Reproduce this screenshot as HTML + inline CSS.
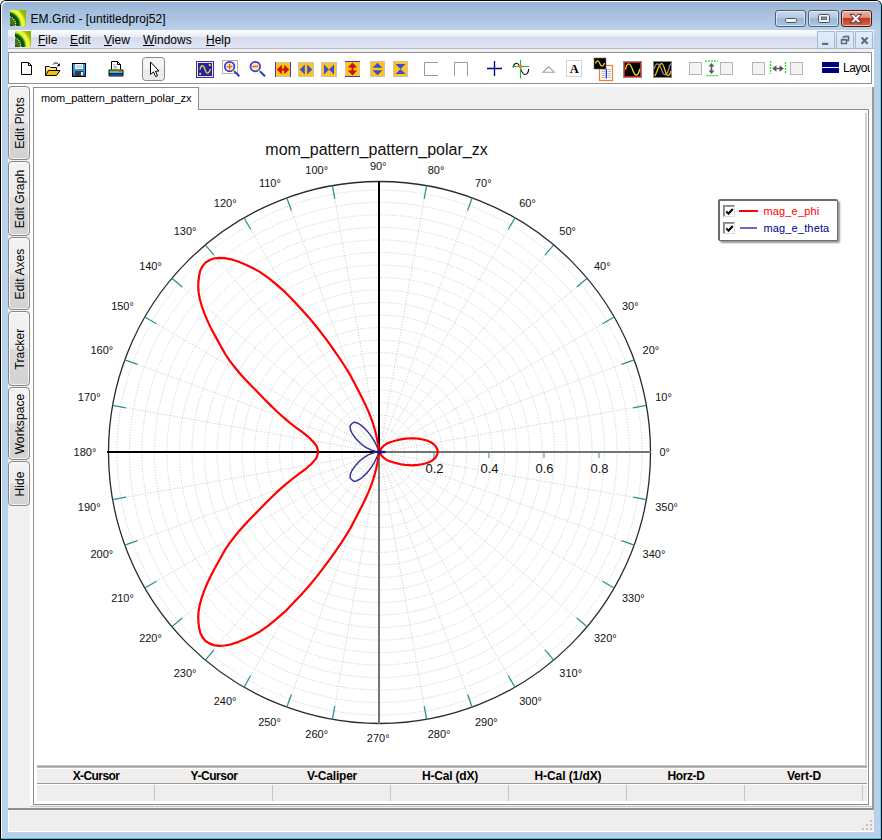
<!DOCTYPE html>
<html>
<head>
<meta charset="utf-8">
<title>EM.Grid - [untitledproj52]</title>
<style>
*{box-sizing:border-box;margin:0;padding:0}
html,body{width:882px;height:840px;overflow:hidden;background:#fff}
body{font-family:"Liberation Sans",Arial,sans-serif;font-size:12px;color:#000;position:relative}
.abs{position:absolute}
#win{position:absolute;left:0;top:0;width:882px;height:840px;background:#000;border-radius:6px 6px 0 0;overflow:hidden}
#glass{position:absolute;left:1px;top:1px;width:880px;height:838px;border-radius:5px 5px 0 0;background:linear-gradient(#98b3d3 0,#9ab5d5 2px,#b9d1ea 29px,#b9d1ea 100%);overflow:hidden;box-shadow:inset 1px 1px 0 0 #fbfdff}
#hl-top{display:none}
#hl-left{display:none}
#cy-right{position:absolute;left:879px;top:3px;width:1px;height:835px;background:#4dd0fb}
#cy-bot{position:absolute;left:0;top:837px;width:880px;height:1px;background:#35c8f0}
#client{position:absolute;left:8px;top:30px;width:864px;height:801px;background:#f0f0f0}
#rshadow{position:absolute;left:872px;top:85px;width:2px;height:725px;background:#9a9a9a}
#title{position:absolute;left:30.5px;top:11px;height:16px;line-height:16px;font-size:12px;color:#000;white-space:nowrap;letter-spacing:.07px}
.cap{position:absolute;top:10px;height:17px;border:1px solid #4f5f78;border-radius:3px;box-shadow:inset 0 0 0 1px rgba(255,255,255,.55)}
.cap.n{background:linear-gradient(#c9d9ec 0,#b5c9e2 47%,#9db8d8 50%,#a9c2de 100%)}
.cap.c{background:linear-gradient(#e9b4a6 0,#d98a78 47%,#c0391f 50%,#d4694f 100%);border-color:#4a1515}
#menubar{position:absolute;left:8px;top:30px;width:866px;height:18px;background:linear-gradient(#fdfdfe 0,#e9ecf5 6.5px,#d5dbee 7px,#e1e6f5 18px)}
#menuline{position:absolute;left:8px;top:48px;width:866px;height:1px;background:#b6bccc}
.mi{position:absolute;top:32px;height:16px;line-height:16px;font-size:12px;white-space:nowrap}
.mi u{text-decoration:underline;text-underline-offset:1px;text-decoration-thickness:1px}
.mdi{position:absolute;top:31px;width:18px;height:18px;border:1px solid #a6b9d3;background:linear-gradient(#e2ecf9,#d8e5f6)}
#toolbar{position:absolute;left:8px;top:52px;width:864px;height:32px;border:1px solid #8e8e98;background:#fff;overflow:hidden}
.sb{position:absolute;left:8px;width:22px;border:1px solid #868686;border-radius:4px;background:linear-gradient(#f3f3f3 0,#ececec 48%,#dcdcdc 52%,#d2d2d2 100%);box-shadow:inset 0 0 0 1px rgba(255,255,255,.7)}
.sb span{position:absolute;left:calc(50% + 1px);top:50%;white-space:nowrap;font-size:12px;transform:translate(-50%,-50%) rotate(-90deg);letter-spacing:.1px}
#strip{position:absolute;left:30px;top:87px;width:3px;height:720px;background:#fff}
#rstrip{position:absolute;left:869px;top:109px;width:3px;height:698px;background:#fff}
#wstrip{position:absolute;left:8px;top:84px;width:866px;height:3px;background:#fff}
#wcol{position:absolute;left:872px;top:49px;width:2px;height:36px;background:#fff}
#panel{position:absolute;left:33px;top:109px;width:836px;height:696px;border:1px solid #8c8e9a;background:#fff}
#tab{position:absolute;left:33px;top:87px;width:166px;height:23px;border:1px solid #8c8e9a;border-bottom:none;background:#fff}
#tab span{position:absolute;left:7px;top:4px;font-size:11px;line-height:13px;white-space:nowrap;letter-spacing:-.09px}
.plot{position:absolute;left:34px;top:110px}
#vline{position:absolute;left:865px;top:113px;width:2px;height:653px;background:#d2d2d2}
#hline{position:absolute;left:37px;top:765px;width:830px;height:3px;background:linear-gradient(#c8c8c8 0,#c8c8c8 1px,#9c9c9c 1px,#9c9c9c 2px,#c0c0c0 2px)}
#th{position:absolute;left:37px;top:769px;width:830px;height:14px;background:#f0eded}
#thl{position:absolute;left:37px;top:783px;width:830px;height:1px;background:#9a9a9a}
#tr{position:absolute;left:37px;top:785px;width:830px;height:16px;background:#f0eded}
.hc{position:absolute;top:769px;width:118px;height:15px;line-height:15px;text-align:center;font-weight:bold;font-size:12px;letter-spacing:-.65px;white-space:nowrap}
.vs{position:absolute;top:785px;width:1px;height:16px;background:#c6c6c6}
#pbot2{position:absolute;left:30px;top:806px;width:842px;height:1px;background:#c8c8c8}
#stl{position:absolute;left:8px;top:808px;width:865px;height:2px;background:#8f8f8f}
#status{position:absolute;left:8px;top:810px;width:866px;height:22px;background:#f0eded;border-left:1px solid #fff;border-bottom:1px solid #fff}
</style>
</head>
<body>
<div id="win">
<div id="glass"><div id="hl-top"></div><div id="hl-left"></div><div id="cy-right"></div><div id="cy-bot"></div></div>
<div id="client"></div>
<div id="rshadow"></div>

<!-- title bar -->
<svg class="abs" style="left:10px;top:10px" width="16" height="16" viewBox="0 0 16 16"><defs><radialGradient id="rg1" gradientUnits="userSpaceOnUse" cx="-3" cy="15" r="26"><stop offset="0" stop-color="#5a8a10"/><stop offset=".327" stop-color="#3f6f08"/><stop offset=".358" stop-color="#0a4208"/><stop offset=".46" stop-color="#0c5a0c"/><stop offset=".508" stop-color="#48b018"/><stop offset=".55" stop-color="#e4f030"/><stop offset=".635" stop-color="#f8f840"/><stop offset=".69" stop-color="#d4e424"/><stop offset=".75" stop-color="#98c008"/><stop offset="1" stop-color="#6ea800"/></radialGradient></defs><rect width="16" height="16" fill="url(#rg1)"/><circle cx="-3" cy="15" r="8.8" fill="none" stroke="#f4f8e8" stroke-width="1.1" stroke-dasharray="1.2 1"/><circle cx="-3" cy="15" r="19.2" fill="none" stroke="#9aa820" stroke-width=".7" stroke-dasharray="1 1" opacity=".8"/><rect x="0" y="14.5" width="2.5" height="1.5" fill="#2a2a3a" opacity=".8"/></svg>
<div id="title">EM.Grid - [untitledproj52]</div>
<div class="cap n" style="left:775px;width:31px"><svg class="abs" style="left:9px;top:7px" width="13" height="6"><rect x=".5" y=".5" width="11" height="4" rx="1.2" fill="#f4f4f4" stroke="#4a5565"/></svg></div>
<div class="cap n" style="left:808px;width:31px"><svg class="abs" style="left:8.5px;top:3px" width="13" height="10"><rect x=".5" y=".5" width="11" height="8" rx="1.2" fill="#f4f4f4" stroke="#4a5565"/><rect x="3.5" y="3" width="5" height="2.6" fill="#7f98b8" stroke="#4a5565" stroke-width=".8"/></svg></div>
<div class="cap c" style="left:841px;width:31px"><svg class="abs" style="left:7.4px;top:2px" width="15" height="12" viewBox="0 0 15 12"><path d="M1 1.4 H4.8 L6.8 3.7 L8.8 1.4 H12.6 L8.9 5.6 L12.6 9.8 H8.8 L6.8 7.5 L4.8 9.8 H1 L4.7 5.6 Z" fill="#f8f8f8" stroke="#4a2828" stroke-width=".9" stroke-linejoin="round"/></svg></div>

<!-- menu bar -->
<div id="menubar"></div><div id="menuline"></div>
<svg class="abs" style="left:15px;top:31px" width="16" height="16" viewBox="0 0 16 16"><rect width="16" height="16" fill="url(#rg1)"/><circle cx="-3" cy="15" r="8.8" fill="none" stroke="#f4f8e8" stroke-width="1.1" stroke-dasharray="1.2 1"/><circle cx="-3" cy="15" r="19.2" fill="none" stroke="#9aa820" stroke-width=".7" stroke-dasharray="1 1" opacity=".8"/><rect x="0" y="14.5" width="2.5" height="1.5" fill="#2a2a3a" opacity=".8"/></svg>
<div class="mi" style="left:38px"><u>F</u>ile</div>
<div class="mi" style="left:70px"><u>E</u>dit</div>
<div class="mi" style="left:104px"><u>V</u>iew</div>
<div class="mi" style="left:143px"><u>W</u>indows</div>
<div class="mi" style="left:206px"><u>H</u>elp</div>
<div class="mdi" style="left:817px"><svg width="16" height="16"><rect x="4" y="10.800" width="6.200" height="2.100" fill="#5e687c"/></svg></div>
<div class="mdi" style="left:836px"><svg width="16" height="16"><path d="M6.5 4.5h5v4h-2 M6.5 6v-1.5" fill="none" stroke="#5e687c" stroke-width="1.6"/><rect x="4.5" y="7.5" width="5" height="4" fill="none" stroke="#5e687c" stroke-width="1.4"/><rect x="4" y="7" width="6" height="1.6" fill="#5e687c"/></svg></div>
<div class="mdi" style="left:855px"><svg width="16" height="16"><path d="M5.600 5.500 L11.600 11.700 M11.600 5.500 L5.600 11.700" stroke="#5e687c" stroke-width="2"/></svg></div>

<!-- toolbar -->
<div id="wstrip"></div><div id="wcol"></div><div id="toolbar"></div>
<svg class="abs" style="left:10px;top:53px" width="859.5" height="30" viewBox="10 53 859.5 30">
<!-- new -->
<path d="M21.5 62.5 H28.5 L31.5 65.5 V74.5 H21.5 Z" fill="#fff" stroke="#000" stroke-width="1"/>
<path d="M28.5 62.5 V65.5 H31.5" fill="none" stroke="#000" stroke-width="1"/>
<!-- open -->
<path d="M45.5 75.5 V66.5 H49.5 L50.5 67.5 H56.5 V70" fill="#fbf3c8" stroke="#000" stroke-width="1"/>
<path d="M47 68.500h1v1h-1zM49 68.500h1v1h-1zM51 68.500h1v1h-1zM53 68.500h1v1h-1zM55 68.500h1v1h-1zM48 69.500h1v1h-1zM46 69.500h1v1h-1zM46 71.500h1v1h-1zM47 70.500h1v1h-1zM46 73.500h1v1h-1zM47 72.500h1v1h-1z" fill="#f5c400"/><path d="M45.5 75.5 L48.5 70.5 H60 L56.5 75.5 Z" fill="#f5c400" stroke="#000" stroke-width="1" stroke-linejoin="round"/>
<path d="M53 64.5 C54.5 62.3 57.5 62.3 59 65" fill="none" stroke="#000" stroke-width="1"/>
<path d="M59.8 63 V66.2 H56.8 Z" fill="#000"/>
<!-- save -->
<rect x="72.5" y="63.5" width="13" height="13" fill="#1e9cf0" stroke="#000"/>
<rect x="75" y="64" width="8" height="5" fill="#f4f4f4"/>
<rect x="76" y="65" width="6" height="3" fill="#d4d4d4"/>
<rect x="75" y="71" width="8.5" height="5" fill="#3a3a3a"/>
<rect x="81" y="72" width="1.8" height="3.4" fill="#fff"/>
<rect x="73" y="73.5" width="1.5" height="2.5" fill="#3a3ad0"/><rect x="84" y="73.5" width="1.5" height="2.5" fill="#3a3ad0"/>
<!-- print -->
<path d="M111.5 69.5 V61.5 H117.5 L120.5 64.5 V69.5" fill="#fff" stroke="#000"/>
<path d="M117.5 61.5 V64.5 H120.5" fill="none" stroke="#000"/>
<path d="M113.5 64.5h2 M113.5 66.5h3 M113.5 68h4" stroke="#888" stroke-width=".8"/>
<rect x="108.5" y="69.5" width="15" height="7" rx="1" fill="#000"/>
<rect x="109.5" y="70.5" width="13" height="1.3" fill="#c8e020"/>
<rect x="109.5" y="71.8" width="13" height="1.5" fill="#18c8d8"/>
<rect x="109.5" y="73.3" width="13" height="1.2" fill="#102080"/>
<rect x="109.5" y="74.5" width="13" height="1.2" fill="#3868d8"/>
<rect x="119" y="70.6" width="2" height="1.2" fill="#e03030"/>
<!-- pointer button -->
<rect x="142.5" y="57.5" width="22" height="23" rx="3" fill="#ececec" stroke="#8a8a8a"/>
<rect x="143.5" y="58.5" width="20" height="10.5" rx="2" fill="#f5f5f5"/>
<path d="M150.5 62 V74.5 L153.4 71.9 L155.6 76.6 L157.6 75.7 L155.4 71.2 L159 71 Z" fill="#fff" stroke="#000" stroke-width="1" stroke-linejoin="miter"/>
<!-- scope -->
<rect x="196" y="61" width="18" height="17" fill="#2424a8"/>
<rect x="196.5" y="61.5" width="17" height="16" fill="none" stroke="#3030d0" stroke-width="1"/>
<rect x="197.5" y="62.5" width="15" height="14" fill="none" stroke="#f4e8b0" stroke-width="1"/>
<path d="M200 69.5 C201 64.5 203.5 64.5 205 69.5 S208.5 74.5 210.5 69" fill="none" stroke="#f5d020" stroke-width="1.3"/>
<rect x="208.8" y="64" width="2" height="2" fill="#f5d020"/><rect x="199.2" y="72.8" width="2" height="2" fill="#f5d020"/>
<!-- zoom in -->
<rect x="222.5" y="60.5" width="15" height="13" fill="none" stroke="#b0b0b0"/>
<circle cx="229.6" cy="66.6" r="4.8" fill="#f6ecc0" stroke="#3838d8" stroke-width="1.7"/>
<path d="M226.8 66.6 h5.6 M229.6 63.8 v5.6" stroke="#f06010" stroke-width="1.3"/>
<path d="M233 70 L234.6 71.6" stroke="#90d020" stroke-width="1.6"/>
<path d="M234.4 71.4 L239.3 76.3" stroke="#3030c8" stroke-width="2"/>
<!-- zoom out -->
<circle cx="255.3" cy="66.6" r="4.8" fill="#f6ecc0" stroke="#3838d8" stroke-width="1.7"/>
<path d="M252.4 66.4 h5.8" stroke="#f06010" stroke-width="1.5"/>
<path d="M258.7 70 L260.3 71.6" stroke="#90d020" stroke-width="1.6"/>
<path d="M260.1 71.4 L265 76.3" stroke="#3030c8" stroke-width="2"/>
<!-- h-fit -->
<rect x="275" y="62" width="16" height="15" fill="#ffc414"/>
<path d="M275 62.5 h16 M275 76.5 h16" stroke="#c4c4c4"/>
<path d="M275.5 62 v15 M290.5 62 v15" stroke="#3838d8"/>
<path d="M276.8 69.5 L281.8 64.8 V74.2 Z M289.2 69.5 L284.2 64.8 V74.2 Z" fill="#c81010"/>
<path d="M281 69.5 h4" stroke="#c81010" stroke-width="2"/>
<!-- h-expand -->
<rect x="298.5" y="62.5" width="15" height="14" fill="#ffc414" stroke="#c4c4c4"/>
<path d="M299.8 69.5 L304.8 64.5 V74.5 Z M312.2 69.5 L307.2 64.5 V74.5 Z" fill="#3c4cd8"/>
<!-- h-contract -->
<rect x="321.5" y="62.5" width="15" height="14" fill="#ffc414" stroke="#c4c4c4"/>
<path d="M324 64.5 L329 69.5 L324 74.5 Z M334 64.5 L329 69.5 L334 74.5 Z" fill="#3c4cd8"/>
<!-- v-fit -->
<rect x="345" y="61" width="15" height="16" fill="#ffc414"/>
<path d="M345.5 61 v16 M359.5 61 v16" stroke="#c4c4c4"/>
<path d="M345 61.5 h15 M345 76.5 h15" stroke="#3838d8"/>
<path d="M352.5 62.6 L347.8 67.6 H357.2 Z M352.5 75.4 L347.8 70.4 H357.2 Z" fill="#c81010"/>
<path d="M352.5 67 v4" stroke="#c81010" stroke-width="2"/>
<!-- v-expand -->
<rect x="370.500" y="61.500" width="14" height="15" fill="#ffc414" stroke="#c4c4c4"/>
<path d="M377.5 62.8 L372.5 67.8 H382.5 Z M377.5 75.2 L372.5 70.2 H382.500 Z" fill="#3c4cd8"/>
<!-- v-contract -->
<rect x="393.500" y="61.500" width="14" height="15" fill="#ffc414" stroke="#c4c4c4"/>
<path d="M395.500 64 H405.500 L400.500 69 Z M395.500 74 H405.500 L400.500 69 Z" fill="#3c4cd8"/>
<!-- brackets -->
<path d="M438 62.500 H424.500 V75.500 H438" fill="none" stroke="#9a9a9a"/>
<path d="M454.500 76 V62.500 H467.500 V76" fill="none" stroke="#9a9a9a"/>
<!-- plus -->
<path d="M487 68.500 H502 M494.500 61 V76" stroke="#000080" stroke-width="1.350"/>
<!-- sine cursor -->
<path d="M513 67.300 C514.500 62.300 517.500 62 519.500 66 C521 69.500 522 74.500 525 74.500 C527.500 74.500 528.500 71.500 528.800 69" fill="none" stroke="#000" stroke-width="1.100"/>
<path d="M512.500 66.500 H529 M520.500 60 V78.500" stroke="#20b838" stroke-width="1.100"/>
<rect x="519" y="65" width="3" height="3" fill="#f08020"/>
<!-- triangle -->
<path d="M543 72.200 L548.600 66.800 L554.300 72.200 Z" fill="none" stroke="#a0a0a0" stroke-width="1.100"/>
<!-- A -->
<rect x="566.500" y="60.500" width="15" height="16" fill="#fff" stroke="#a8a8a8" stroke-dasharray="1 1"/>
<text x="574.2" y="72.8" font-family="'Liberation Serif',serif" font-weight="bold" font-size="12.5" text-anchor="middle" fill="#000">A</text>
<!-- scope+doc -->
<rect x="599.500" y="65.500" width="13" height="15" fill="#fff" stroke="#f08030" stroke-width="1.200"/>
<path d="M601.500 69.500h3.500M601.500 71.500h3.500M601.500 73.500h3.500M601.500 75.500h3.500M601.500 77.500h3.500M607.500 69.500h3.500M607.500 71.500h3.500M607.500 73.500h3.500M607.500 75.500h3.500M607.500 77.500h3.500" stroke="#a8a8a8" stroke-width=".800"/>
<path d="M606.300 68.500 V78.500" stroke="#2828e0" stroke-width="1.300"/>
<rect x="594" y="58" width="12" height="11" fill="#000" stroke="#777" stroke-width=".600"/>
<path d="M595.500 63.500 C596.500 60 598.500 60 599.800 63.500 S603 67 604.600 63" fill="none" stroke="#f5d020" stroke-width="1.300"/>
<!-- red scope -->
<rect x="623" y="61" width="19" height="17" fill="#8a8a8a"/>
<rect x="624" y="62" width="17" height="15" fill="#e01818"/>
<rect x="625" y="63" width="15" height="13" fill="#000"/>
<path d="M625.500 69.500 C627 62 630 62 632.500 69.500 S638 77 639.800 69" fill="none" stroke="#f5e020" stroke-width="1.300"/>
<!-- dual scope -->
<rect x="653" y="61" width="19" height="17" fill="#8a8a8a"/>
<rect x="654" y="62" width="17" height="15" fill="#000"/>
<path d="M654 69 C656 62 659 62 661.500 69.500 S667 77 669.500 66 L671 63.500" fill="none" stroke="#9a9a9a" stroke-width="1.200"/>
<path d="M654.500 76 C657 74 658.500 63.500 661.500 63.500 C664.500 63.500 665 75.500 668 75.500 C669.500 75.500 670.500 73 671 71" fill="none" stroke="#f0b818" stroke-width="1.400"/>
<!-- squares + arrows -->
<g fill="#f3f3f3" stroke="#b4b4b4">
<rect x="689.500" y="62.500" width="12" height="12"/>
<rect x="720.500" y="62.500" width="12" height="12"/>
<rect x="752.500" y="62.500" width="12" height="12"/>
<rect x="790.500" y="62.500" width="12" height="12"/>
</g>
<path d="M705 61.200 H718 M706.500 75.700 H718" stroke="#18e018" stroke-width="1.3" stroke-dasharray="2 1"/>
<path d="M711.500 63 L708.500 66.500 H714.500 Z M711.500 74 L708.500 70.500 H714.500 Z" fill="#5a5a5a"/>
<path d="M711.500 66 V71" stroke="#5a5a5a" stroke-width="1.600"/>
<path d="M770.500 61 V74 M785.500 62 V74" stroke="#18e018" stroke-width="1.3" stroke-dasharray="2 1"/>
<path d="M772.2 68.500 L776.400 65.200 V71.800 Z M783.800 68.500 L779.600 65.200 V71.800 Z" fill="#555"/>
<path d="M775.500 68.500 H780.500" stroke="#5a5a5a" stroke-width="1.400"/>
<!-- layout -->
<rect x="822" y="62" width="17" height="5" fill="#000080"/>
<rect x="822" y="68" width="17" height="5" fill="#000080"/>
<text x="843" y="72.300" font-family="'Liberation Sans',Arial,sans-serif" font-size="12" letter-spacing="-0.5" fill="#000">Layout</text>
</svg>


<!-- side buttons -->
<div class="sb" style="top:86px;height:74px"><span>Edit Plots</span></div>
<div class="sb" style="top:161px;height:75px"><span>Edit Graph</span></div>
<div class="sb" style="top:237px;height:73px"><span>Edit Axes</span></div>
<div class="sb" style="top:311px;height:75px"><span>Tracker</span></div>
<div class="sb" style="top:387px;height:73px"><span>Workspace</span></div>
<div class="sb" style="top:461px;height:45px"><span>Hide</span></div>

<!-- panel -->
<div id="strip"></div><div id="rstrip"></div>
<div id="panel"></div>
<div id="tab"><span>mom_pattern_pattern_polar_zx</span></div>
<svg class="plot" width="832" height="656" viewBox="34 110 832 656">
<g fill="none" stroke="#cacaca" stroke-width="1" stroke-dasharray="1 1.7">
<circle cx="379.5" cy="452.5" r="12.5"/>
<circle cx="379.5" cy="452.5" r="25"/>
<circle cx="379.5" cy="452.5" r="37.5"/>
<circle cx="379.5" cy="452.5" r="50"/>
<circle cx="379.5" cy="452.5" r="62.5"/>
<circle cx="379.5" cy="452.5" r="75"/>
<circle cx="379.5" cy="452.5" r="87.5"/>
<circle cx="379.5" cy="452.5" r="100"/>
<circle cx="379.5" cy="452.5" r="112.5"/>
<circle cx="379.5" cy="452.5" r="125"/>
<circle cx="379.5" cy="452.5" r="137.5"/>
<circle cx="379.5" cy="452.5" r="150"/>
<circle cx="379.5" cy="452.5" r="162.5"/>
<circle cx="379.5" cy="452.5" r="175"/>
<circle cx="379.5" cy="452.5" r="187.5"/>
<circle cx="379.5" cy="452.5" r="200"/>
<circle cx="379.5" cy="452.5" r="212.5"/>
<circle cx="379.5" cy="452.5" r="225"/>
<circle cx="379.5" cy="452.5" r="237.5"/>
<circle cx="379.5" cy="452.5" r="250"/>
<circle cx="379.5" cy="452.5" r="262.5"/>
<line x1="392.3" y1="450.2" x2="646.4" y2="405.4"/>
<line x1="391.7" y1="448.1" x2="634.2" y2="359.8"/>
<line x1="390.8" y1="446.0" x2="614.2" y2="317.0"/>
<line x1="389.5" y1="444.1" x2="587.1" y2="278.3"/>
<line x1="387.9" y1="442.5" x2="553.7" y2="244.9"/>
<line x1="386.0" y1="441.2" x2="515.0" y2="217.8"/>
<line x1="383.9" y1="440.3" x2="472.2" y2="197.8"/>
<line x1="381.8" y1="439.7" x2="426.6" y2="185.6"/>
<line x1="377.2" y1="439.7" x2="332.4" y2="185.6"/>
<line x1="375.1" y1="440.3" x2="286.8" y2="197.8"/>
<line x1="373.0" y1="441.2" x2="244.0" y2="217.8"/>
<line x1="371.1" y1="442.5" x2="205.3" y2="244.9"/>
<line x1="369.5" y1="444.1" x2="171.9" y2="278.3"/>
<line x1="368.2" y1="446.0" x2="144.8" y2="317.0"/>
<line x1="367.3" y1="448.1" x2="124.8" y2="359.8"/>
<line x1="366.7" y1="450.2" x2="112.6" y2="405.4"/>
<line x1="366.7" y1="454.8" x2="112.6" y2="499.6"/>
<line x1="367.3" y1="456.9" x2="124.8" y2="545.2"/>
<line x1="368.2" y1="459.0" x2="144.8" y2="588.0"/>
<line x1="369.5" y1="460.9" x2="171.9" y2="626.7"/>
<line x1="371.1" y1="462.5" x2="205.3" y2="660.1"/>
<line x1="373.0" y1="463.8" x2="244.0" y2="687.2"/>
<line x1="375.1" y1="464.7" x2="286.8" y2="707.2"/>
<line x1="377.2" y1="465.3" x2="332.4" y2="719.4"/>
<line x1="381.8" y1="465.3" x2="426.6" y2="719.4"/>
<line x1="383.9" y1="464.7" x2="472.2" y2="707.2"/>
<line x1="386.0" y1="463.8" x2="515.0" y2="687.2"/>
<line x1="387.9" y1="462.5" x2="553.7" y2="660.1"/>
<line x1="389.5" y1="460.9" x2="587.1" y2="626.7"/>
<line x1="390.8" y1="459.0" x2="614.2" y2="588.0"/>
<line x1="391.7" y1="456.9" x2="634.2" y2="545.2"/>
<line x1="392.3" y1="454.8" x2="646.4" y2="499.6"/>
</g>
<circle cx="379.5" cy="452.5" r="271" fill="none" stroke="#2a2a2a" stroke-width="1.3"/>
<g stroke="#2f8f8f" stroke-width="1.25">
<line x1="646.4" y1="405.4" x2="633.1" y2="407.8"/>
<line x1="634.2" y1="359.8" x2="621.5" y2="364.4"/>
<line x1="614.2" y1="317.0" x2="602.5" y2="323.8"/>
<line x1="587.1" y1="278.3" x2="576.8" y2="287.0"/>
<line x1="553.7" y1="244.9" x2="545.0" y2="255.2"/>
<line x1="515.0" y1="217.8" x2="508.2" y2="229.5"/>
<line x1="472.2" y1="197.8" x2="467.6" y2="210.5"/>
<line x1="426.6" y1="185.6" x2="424.2" y2="198.9"/>
<line x1="332.4" y1="185.6" x2="334.8" y2="198.9"/>
<line x1="286.8" y1="197.8" x2="291.4" y2="210.5"/>
<line x1="244.0" y1="217.8" x2="250.8" y2="229.5"/>
<line x1="205.3" y1="244.9" x2="214.0" y2="255.2"/>
<line x1="171.9" y1="278.3" x2="182.2" y2="287.0"/>
<line x1="144.8" y1="317.0" x2="156.5" y2="323.8"/>
<line x1="124.8" y1="359.8" x2="137.5" y2="364.4"/>
<line x1="112.6" y1="405.4" x2="125.9" y2="407.8"/>
<line x1="112.6" y1="499.6" x2="125.9" y2="497.2"/>
<line x1="124.8" y1="545.2" x2="137.5" y2="540.6"/>
<line x1="144.8" y1="588.0" x2="156.5" y2="581.2"/>
<line x1="171.9" y1="626.7" x2="182.2" y2="618.0"/>
<line x1="205.3" y1="660.1" x2="214.0" y2="649.8"/>
<line x1="244.0" y1="687.2" x2="250.7" y2="675.5"/>
<line x1="286.8" y1="707.2" x2="291.4" y2="694.5"/>
<line x1="332.4" y1="719.4" x2="334.8" y2="706.1"/>
<line x1="426.6" y1="719.4" x2="424.2" y2="706.1"/>
<line x1="472.2" y1="707.2" x2="467.6" y2="694.5"/>
<line x1="515.0" y1="687.2" x2="508.2" y2="675.5"/>
<line x1="553.7" y1="660.1" x2="545.0" y2="649.8"/>
<line x1="587.1" y1="626.7" x2="576.8" y2="618.0"/>
<line x1="614.2" y1="588.0" x2="602.5" y2="581.3"/>
<line x1="634.2" y1="545.2" x2="621.5" y2="540.6"/>
<line x1="646.4" y1="499.6" x2="633.1" y2="497.2"/>
</g>
<line x1="107" y1="452" x2="379" y2="452" stroke="#000" stroke-width="2"/>
<line x1="379" y1="181" x2="379" y2="453" stroke="#000" stroke-width="2"/>
<line x1="379" y1="452" x2="651" y2="452" stroke="#747474" stroke-width="2"/>
<line x1="379" y1="453" x2="379" y2="724" stroke="#747474" stroke-width="2"/>
<g stroke="#62b0b0" stroke-width="1.4">
<line x1="434" y1="453" x2="434" y2="458"/>
<line x1="489" y1="453" x2="489" y2="458"/>
<line x1="544" y1="453" x2="544" y2="458"/>
<line x1="599" y1="453" x2="599" y2="458"/>
</g>
<polyline fill="none" stroke="#30309c" stroke-width="1.45" stroke-linejoin="round" points="379.5,452.0 379.0,452.0 378.3,449.9 377.5,447.9 376.7,445.9 375.7,444.0 374.8,442.1 373.8,440.2 372.7,438.5 371.6,436.7 370.4,435.1 369.1,433.4 367.8,431.9 366.5,430.4 365.2,429.0 363.8,427.7 362.4,426.4 360.9,425.2 359.5,424.2 358.3,423.6 357.2,423.0 356.0,422.6 355.0,422.3 354.1,422.3 353.5,422.6 352.9,423.0 352.3,423.4 351.8,423.8 351.3,424.3 350.8,424.8 350.4,425.3 350.1,426.0 350.1,426.9 350.2,427.8 350.4,428.8 350.6,429.8 350.9,430.8 351.4,431.9 352.0,433.1 352.8,434.3 353.6,435.5 354.4,436.6 355.2,437.7 356.0,438.7 356.9,439.7 357.8,440.7 358.7,441.6 359.6,442.5 360.6,443.4 361.6,444.2 362.6,445.0 363.6,445.8 364.6,446.5 365.7,447.1 366.7,447.8 367.8,448.4 369.0,448.9 370.1,449.5 371.3,449.9 372.5,450.4 373.8,450.8 375.0,451.2 376.3,451.5 377.7,451.8 379.0,452.0 379.5,452.0"/>
<polyline fill="none" stroke="#30309c" stroke-width="1.45" stroke-linejoin="round" points="379.5,451.6 379.0,451.6 378.3,453.7 377.5,455.7 376.7,457.7 375.7,459.6 374.8,461.5 373.8,463.4 372.7,465.1 371.6,466.9 370.4,468.5 369.1,470.2 367.8,471.7 366.5,473.2 365.2,474.6 363.8,475.9 362.4,477.2 360.9,478.4 359.5,479.4 358.3,480.0 357.2,480.6 356.0,481.0 355.0,481.3 354.1,481.3 353.5,481.0 352.9,480.6 352.3,480.2 351.8,479.8 351.3,479.3 350.8,478.8 350.4,478.3 350.1,477.6 350.1,476.7 350.2,475.8 350.4,474.8 350.6,473.8 350.9,472.8 351.4,471.7 352.0,470.5 352.8,469.3 353.6,468.1 354.4,467.0 355.2,465.9 356.0,464.9 356.9,463.9 357.8,462.9 358.7,462.0 359.6,461.1 360.6,460.2 361.6,459.4 362.6,458.6 363.6,457.8 364.6,457.1 365.7,456.5 366.7,455.8 367.8,455.2 369.0,454.7 370.1,454.1 371.3,453.7 372.5,453.2 373.8,452.8 375.0,452.4 376.3,452.1 377.7,451.8 379.0,451.6 379.5,451.6"/>
<polyline fill="none" stroke="#f00" stroke-width="2.2" stroke-linejoin="round" points="437.9,452.0 437.7,451.0 437.5,450.0 437.1,449.0 436.6,448.0 436.1,447.0 435.5,446.1 434.7,445.2 433.7,444.3 432.7,443.5 431.6,442.7 430.4,442.0 429.0,441.4 427.5,440.8 425.9,440.3 424.3,439.9 422.7,439.5 421.1,439.1 419.4,438.9 417.7,438.7 416.1,438.5 414.4,438.4 412.8,438.3 411.2,438.3 409.6,438.4 408.0,438.5 406.5,438.6 405.0,438.7 403.6,438.9 402.3,439.1 401.0,439.3 399.7,439.6 398.4,439.9 397.2,440.2 396.1,440.5 395.0,440.8 394.1,441.0 393.2,441.3 392.4,441.5 391.6,441.8 390.9,442.0 390.3,442.2 389.6,442.4 389.0,442.7 388.4,442.9 387.9,443.1 387.3,443.4 386.7,443.7 386.2,444.0 385.6,444.4 385.1,444.8 384.5,445.2 383.9,445.7 383.3,446.2 382.8,446.8 382.3,447.3 381.7,447.9 381.2,448.5 380.8,449.2 380.3,449.9 379.8,450.5 379.4,451.3 379.0,452.0 379.5,452.0 379.0,452.0 378.2,446.0 377.3,440.4 376.2,435.1 374.9,430.0 373.5,425.2 372.0,420.6 370.4,416.3 368.7,412.0 366.6,407.4 364.3,402.4 361.7,397.1 358.6,391.0 354.7,383.5 350.4,375.4 345.9,368.0 341.1,360.5 335.8,352.8 330.1,344.7 323.6,335.9 316.5,326.7 309.2,317.9 301.6,309.4 293.3,300.5 284.6,291.7 276.3,284.4 268.0,277.7 259.8,271.9 252.6,268.0 245.3,264.5 238.0,261.5 231.2,259.3 224.8,258.1 219.0,257.8 213.7,258.5 209.3,260.2 205.5,262.6 202.6,266.1 200.4,270.3 199.2,275.3 198.5,280.7 198.2,286.3 198.6,292.4 199.8,299.0 201.7,305.8 204.2,312.9 207.2,320.1 210.6,327.4 214.4,334.6 218.3,341.6 221.7,347.9 225.2,354.0 229.4,360.3 234.4,366.8 239.6,373.2 245.1,379.3 250.8,385.3 256.3,390.8 261.1,395.8 265.5,400.3 269.6,404.4 273.6,408.3 277.5,412.0 281.3,415.5 285.0,418.7 288.7,421.8 292.2,424.6 295.7,427.3 299.2,429.9 302.4,432.2 305.1,434.3 307.3,436.1 309.2,437.8 311.0,439.4 312.4,440.9 313.6,442.2 314.7,443.5 315.7,444.8 316.5,446.0 317.0,447.1 317.3,448.2 317.6,449.3 317.9,450.4 318.0,451.5 318.0,452.0 318.0,452.1 317.9,453.2 317.6,454.3 317.3,455.4 317.0,456.5 316.5,457.6 315.7,458.8 314.7,460.1 313.6,461.4 312.4,462.7 311.0,464.2 309.2,465.8 307.3,467.5 305.1,469.3 302.4,471.4 299.2,473.7 295.7,476.3 292.2,479.0 288.7,481.8 285.0,484.9 281.3,488.1 277.5,491.6 273.6,495.3 269.6,499.2 265.5,503.3 261.1,507.8 256.3,512.8 250.8,518.3 245.1,524.3 239.6,530.4 234.4,536.8 229.4,543.3 225.2,549.6 221.7,555.7 218.3,562.0 214.4,569.0 210.6,576.2 207.2,583.5 204.2,590.7 201.7,597.8 199.8,604.6 198.6,611.2 198.2,617.3 198.5,622.9 199.2,628.3 200.4,633.3 202.6,637.5 205.5,641.0 209.3,643.4 213.7,645.1 219.0,645.8 224.8,645.5 231.2,644.3 238.0,642.1 245.3,639.1 252.6,635.6 259.8,631.7 268.0,625.9 276.3,619.2 284.6,611.9 293.3,603.1 301.6,594.2 309.2,585.7 316.5,576.9 323.6,567.7 330.1,558.9 335.8,550.8 341.1,543.1 345.9,535.6 350.4,528.2 354.7,520.1 358.6,512.6 361.7,506.5 364.3,501.2 366.6,496.2 368.7,491.6 370.4,487.3 372.0,483.0 373.5,478.4 374.9,473.6 376.2,468.5 377.3,463.2 378.2,457.6 379.0,451.6 379.5,451.6 379.0,451.6 379.4,452.3 379.8,453.1 380.3,453.7 380.8,454.4 381.2,455.1 381.7,455.7 382.3,456.3 382.8,456.8 383.3,457.4 383.9,457.9 384.5,458.4 385.1,458.8 385.6,459.2 386.2,459.6 386.7,459.9 387.3,460.2 387.9,460.5 388.4,460.7 389.0,460.9 389.6,461.2 390.3,461.4 390.9,461.6 391.6,461.8 392.4,462.1 393.2,462.3 394.1,462.6 395.0,462.8 396.1,463.1 397.2,463.4 398.4,463.7 399.7,464.0 401.0,464.3 402.3,464.5 403.6,464.7 405.0,464.9 406.5,465.0 408.0,465.1 409.6,465.2 411.2,465.3 412.8,465.3 414.4,465.2 416.1,465.1 417.7,464.9 419.4,464.7 421.1,464.5 422.7,464.1 424.3,463.7 425.9,463.3 427.5,462.8 429.0,462.2 430.4,461.6 431.6,460.9 432.7,460.1 433.7,459.3 434.7,458.4 435.5,457.5 436.1,456.6 436.6,455.6 437.1,454.6 437.5,453.6 437.7,452.6 437.9,451.6"/>
<path d="M375 452 L378 450.5 L379 449 L380.5 450.5 L385.5 451 L385.5 453 L380.5 453.5 L379 455 L378 453.5 Z" fill="#151580"/>
<g font-family="'Liberation Sans',Arial,sans-serif" fill="#111">
<text x="376.5" y="154.5" font-size="16" text-anchor="middle">mom_pattern_pattern_polar_zx</text>
<g font-size="13">
<text x="434.5" y="472.7" text-anchor="middle">0.2</text>
<text x="489.5" y="472.7" text-anchor="middle">0.4</text>
<text x="544.5" y="472.7" text-anchor="middle">0.6</text>
<text x="599.5" y="472.7" text-anchor="middle">0.8</text>
</g>
<g font-size="11">
<text x="659.5" y="456.0" text-anchor="start">0°</text>
<text x="655.2" y="401.3" text-anchor="start">10°</text>
<text x="642.6" y="354.1" text-anchor="start">20°</text>
<text x="621.9" y="309.8" text-anchor="start">30°</text>
<text x="593.9" y="269.7" text-anchor="start">40°</text>
<text x="559.3" y="235.1" text-anchor="start">50°</text>
<text x="519.2" y="207.1" text-anchor="start">60°</text>
<text x="474.9" y="187.2" text-anchor="start">70°</text>
<text x="427.7" y="173.8" text-anchor="start">80°</text>
<text x="378.2" y="169.5" text-anchor="middle">90°</text>
<text x="328.1" y="173.8" text-anchor="end">100°</text>
<text x="280.9" y="187.2" text-anchor="end">110°</text>
<text x="236.6" y="207.1" text-anchor="end">120°</text>
<text x="196.5" y="235.1" text-anchor="end">130°</text>
<text x="161.9" y="269.7" text-anchor="end">140°</text>
<text x="133.9" y="309.8" text-anchor="end">150°</text>
<text x="113.2" y="354.1" text-anchor="end">160°</text>
<text x="100.6" y="401.3" text-anchor="end">170°</text>
<text x="96.3" y="456.0" text-anchor="end">180°</text>
<text x="100.6" y="510.7" text-anchor="end">190°</text>
<text x="113.2" y="557.9" text-anchor="end">200°</text>
<text x="133.9" y="602.2" text-anchor="end">210°</text>
<text x="161.9" y="642.3" text-anchor="end">220°</text>
<text x="196.5" y="676.9" text-anchor="end">230°</text>
<text x="236.5" y="704.9" text-anchor="end">240°</text>
<text x="280.9" y="725.6" text-anchor="end">250°</text>
<text x="328.1" y="738.2" text-anchor="end">260°</text>
<text x="378.2" y="741.5" text-anchor="middle">270°</text>
<text x="427.7" y="738.2" text-anchor="start">280°</text>
<text x="474.9" y="725.6" text-anchor="start">290°</text>
<text x="519.2" y="704.9" text-anchor="start">300°</text>
<text x="559.3" y="676.9" text-anchor="start">310°</text>
<text x="593.9" y="642.3" text-anchor="start">320°</text>
<text x="621.9" y="602.3" text-anchor="start">330°</text>
<text x="642.6" y="557.9" text-anchor="start">340°</text>
<text x="655.2" y="510.7" text-anchor="start">350°</text>
</g></g>
</svg>
<div id="vline"></div>
<div id="hline"></div>
<div id="th"></div><div id="thl"></div><div id="tr"></div>
<div class="hc" style="left:37px;letter-spacing:-0.6px">X-Cursor</div>
<div class="hc" style="left:155px;letter-spacing:-0.47px">Y-Cursor</div>
<div class="hc" style="left:273px;letter-spacing:-0.2px">V-Caliper</div>
<div class="hc" style="left:391px;letter-spacing:-0.18px">H-Cal (dX)</div>
<div class="hc" style="left:509px;letter-spacing:-0.08px">H-Cal (1/dX)</div>
<div class="hc" style="left:627px;letter-spacing:-0.38px">Horz-D</div>
<div class="hc" style="left:745px;letter-spacing:-0.2px">Vert-D</div>
<div class="vs" style="left:154px"></div><div class="vs" style="left:272px"></div><div class="vs" style="left:390px"></div><div class="vs" style="left:508px"></div><div class="vs" style="left:626px"></div><div class="vs" style="left:744px"></div><div class="vs" style="left:862px"></div>
<div id="pbot2"></div>
<div id="stl"></div>
<div id="status"><svg class="abs" style="right:1px;bottom:0px" width="12" height="12"><g fill="#c2c2c2"><rect x="9" y="9" width="2" height="2"/><rect x="5" y="9" width="2" height="2"/><rect x="1" y="9" width="2" height="2"/><rect x="9" y="5" width="2" height="2"/><rect x="5" y="5" width="2" height="2"/><rect x="9" y="1" width="2" height="2"/></g></svg></div>

<!-- legend -->
<div class="abs" style="left:718px;top:199px;width:120px;height:42px;border:2px solid #6c6c6c;border-right-width:1.5px;border-bottom-width:1.5px;border-radius:2px;background:#fff;box-shadow:2px 2px 2px rgba(0,0,0,.42)"></div>
<div class="abs" style="left:723px;top:205px;width:12px;height:12px;border:1px solid #858585;border-right-color:#dcdcdc;border-bottom-color:#dcdcdc;background:#fff;box-shadow:inset 1px 1px 0 #9a9a9a"><svg class="abs" style="left:0;top:0" width="10" height="10"><path d="M2.300 5.400 L4.500 7.700 L8.700 3" fill="none" stroke="#000" stroke-width="2"/></svg></div>
<div class="abs" style="left:723px;top:222px;width:12px;height:12px;border:1px solid #858585;border-right-color:#dcdcdc;border-bottom-color:#dcdcdc;background:#fff;box-shadow:inset 1px 1px 0 #9a9a9a"><svg class="abs" style="left:0;top:0" width="10" height="10"><path d="M2.300 5.400 L4.500 7.700 L8.700 3" fill="none" stroke="#000" stroke-width="2"/></svg></div>
<div class="abs" style="left:739px;top:210px;width:19px;height:2px;background:#f00"></div>
<div class="abs" style="left:739.5px;top:227px;width:17.500px;height:2px;background:#6c6cba"></div>
<div class="abs" style="left:763.5px;top:204.5px;font-size:11px;line-height:13px;color:#f00;letter-spacing:.15px">mag_e_phi</div>
<div class="abs" style="left:763.5px;top:222px;font-size:11px;line-height:13px;color:#000090;letter-spacing:.15px">mag_e_theta</div>
</div>
</body>
</html>
